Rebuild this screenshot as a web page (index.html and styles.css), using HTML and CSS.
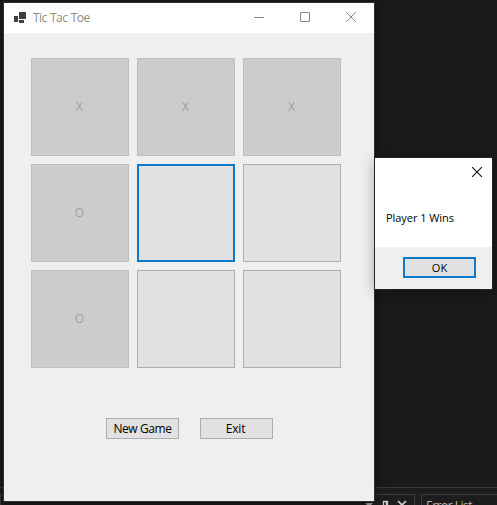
FILE: index.html
```html
<!DOCTYPE html>
<html lang="en">
<head>
<meta charset="utf-8">
<title>Tic Tac Toe</title>
<link rel="stylesheet" href="styles.css">
</head>
<body>
<div class="desktop">
  <div class="dock">
    <div class="pane pane-tools">
      <svg width="50" height="16" viewBox="0 0 50 16">
        <path d="M1 8h8l-4 4z" fill="#c8c8c8"/>
        <path d="M19.500 13V6.500h4V13M22.500 6.500V12" fill="none" stroke="#d0d0d0" stroke-width="1.300"/>
        <path d="M34 6l8 8M42 6l-8 8" stroke="#d0d0d0" stroke-width="1.700"/>
      </svg>
    </div>
    <div class="pane pane-errors"><span>Error List</span></div>
  </div>

  <section class="window">
    <header class="titlebar">
      <svg class="app-icon" width="12" height="12" viewBox="0 0 12 12" fill="#3f3f3f">
        <path d="M5 0h7v7H5zM0 4h4v6H0zM5 8h5v3H5z"/>
      </svg>
      <h1 class="title">Tic Tac Toe</h1>
      <div class="controls">
        <svg width="10" height="10"><path d="M0 5.500h10" stroke="#8c8c8c"/></svg>
        <svg width="10" height="10"><path d="M.5.5h9v9h-9z" fill="none" stroke="#888"/></svg>
        <svg width="10" height="10"><path d="M0 0l10 10M10 0L0 10" stroke="#888"/></svg>
      </div>
    </header>
    <main class="board">
      <button class="cell" disabled>X</button>
      <button class="cell" disabled>X</button>
      <button class="cell" disabled>X</button>
      <button class="cell" disabled>O</button>
      <button class="cell focused"></button>
      <button class="cell"></button>
      <button class="cell" disabled>O</button>
      <button class="cell"></button>
      <button class="cell"></button>
    </main>
    <div class="actions">
      <button class="btn new-game"><span>New Game</span></button>
      <button class="btn exit"><span>Exit</span></button>
    </div>
  </section>

  <section class="dialog">
    <div class="dialog-body">
      <svg class="dialog-close" width="10" height="10"><path d="M0 0l10 10M10 0L0 10" stroke="#111" stroke-width="1.100"/></svg>
      <p class="message">Player 1 Wins</p>
    </div>
    <footer class="dialog-footer">
      <button class="btn ok focused"><span>OK</span></button>
    </footer>
  </section>
</div>
</body>
</html>
```
FILE: styles.css
```css
* { box-sizing: border-box; }

body {
  margin: 0;
  font-family: "Open Sans", "Noto Sans", sans-serif;
  font-size: 12px;
}

.desktop {
  position: relative;
  width: 497px;
  height: 505px;
  overflow: hidden;
  background: #1a1a1a;
}

.dock {
  position: absolute;
  left: 0;
  right: 0;
  bottom: 0;
  height: 18px;
  padding-top: 6px;
  display: flex;
  gap: 6px;
  border-top: 1px solid #3a3a3c;
  background: #1d1d1e;
}

.pane { border: 1px solid #3d3d40; border-bottom: 0; overflow: hidden; }

.pane-tools {
  width: 415px;
  display: flex;
  justify-content: flex-end;
}

.pane-errors {
  flex: 1;
  padding-left: 4px;
  border-right: 0;
  color: #b8b8b8;
  line-height: 21px;
  letter-spacing: -0.5px;
}

.window {
  position: absolute;
  left: 4px;
  top: 3px;
  width: 370px;
  height: 498px;
  background: #efefef;
  box-shadow: 0 0 0 1px #303030, 0 2px 8px #0b0b0b;
}

.titlebar {
  display: flex;
  align-items: center;
  height: 30px;
  padding: 0 18px 0 10px;
  background: #fff;
}

.app-icon { margin-top: -1px; }

.title {
  margin: -1px 0 0 7px;
  color: #8c8c8c;
  font-size: 12px;
  font-weight: 400;
  letter-spacing: -0.6px;
  word-spacing: 1px;
}

.controls {
  display: flex;
  gap: 36px;
  margin-left: auto;
  margin-top: -2px;
}

.controls svg { display: block; }

.board {
  display: grid;
  grid-template-columns: repeat(3, 98px);
  grid-auto-rows: 98px;
  gap: 8px;
  padding: 25px 0 0 27px;
}

.cell,
.btn {
  margin: 0;
  padding: 0;
  border: 1px solid #adadad;
  border-radius: 0;
  background: #e1e1e1;
  color: #000;
  font-family: inherit;
  font-size: 12px;
}

.cell:disabled {
  padding: 0 1px 2px 0;
  border-color: #bfbfbf;
  background: #ccc;
  color: #a0a0a0;
}

.cell.focused,
.btn.focused { border: 2px solid #0f78c8; }

.actions {
  display: flex;
  gap: 21px;
  padding: 50px 0 0 102px;
}

.btn {
  display: flex;
  align-items: center;
  justify-content: center;
  width: 73px;
  height: 21px;
  line-height: 17px;
  white-space: nowrap;
}

.new-game { letter-spacing: -0.4px; }
.exit { padding-right: 2px; letter-spacing: -0.2px; }
.btn.ok { font-size: 11px; }

.dialog {
  position: absolute;
  left: 375px;
  top: 158px;
  width: 117px;
  height: 131px;
  display: flex;
  flex-direction: column;
  background: #fff;
  box-shadow: 0 0 0 1px #252525, 0 3px 14px rgba(0, 0, 0, 0.32);
}

.dialog-body {
  height: 89px;
  display: flex;
  flex-direction: column;
  padding: 9px 10px 0 11px;
}

.dialog-close { align-self: flex-end; }

.message {
  margin: 33px 0 0;
  color: #000;
  font-size: 11px;
  line-height: 16px;
  letter-spacing: -0.05px;
  white-space: nowrap;
}

.dialog-footer {
  flex: 1;
  display: flex;
  justify-content: flex-end;
  padding: 10px 16px 0 0;
  background: #efefef;
}
```
